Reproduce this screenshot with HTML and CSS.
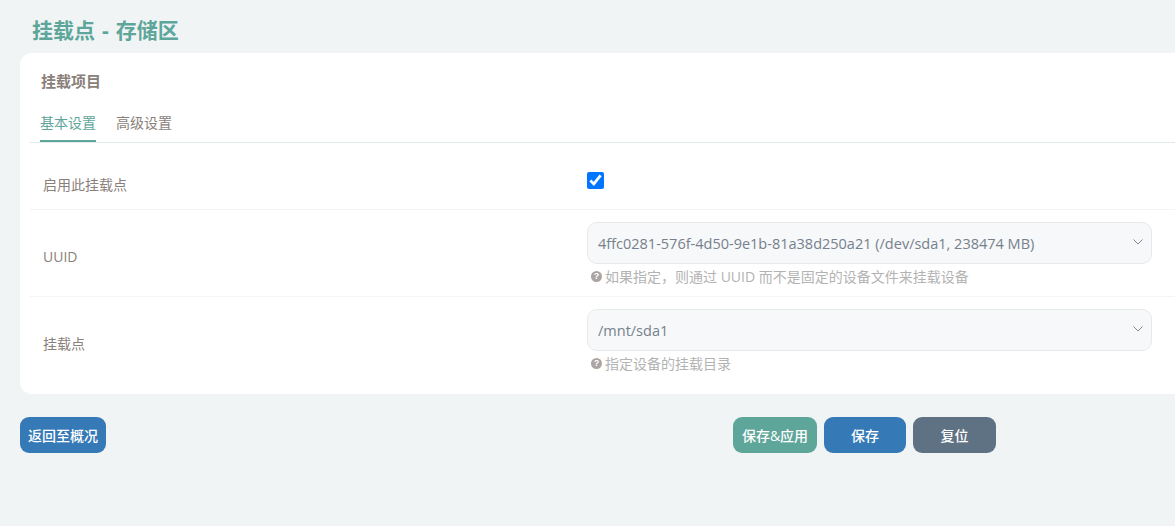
FILE: index.html
```html
<!DOCTYPE html>
<html lang="zh-CN">
<head>
  <meta charset="UTF-8">
  <title>挂载点 - 存储区</title>
  <link rel="stylesheet" href="styles.css">
</head>
<body>
  <div class="main">
    <h2 class="page-title">挂载点 - 存储区</h2>

    <div class="card">
      <h3 class="card-title">挂载项目</h3>
      <ul class="tabs">
        <li class="tab active">基本设置</li>
        <li class="tab">高级设置</li>
      </ul>

      <div class="row row-check">
        <label class="row-label">启用此挂载点</label>
        <div class="row-field">
          <input class="check" type="checkbox" checked>
        </div>
      </div>

      <div class="row">
        <label class="row-label">UUID</label>
        <div class="row-field">
          <div class="select-wrap">
            <select class="select">
              <option>4ffc0281-576f-4d50-9e1b-81a38d250a21 (/dev/sda1, 238474 MB)</option>
            </select>
            <svg class="chevron" width="10" height="6" viewBox="0 0 10 6"><path d="M.5.5L5 5 9.5.5" fill="none" stroke="#7f8a96" stroke-width="1"/></svg>
          </div>
          <div class="hint"><span class="hint-icon">?</span>如果指定，则通过 UUID 而不是固定的设备文件来挂载设备</div>
        </div>
      </div>

      <div class="row row-last">
        <label class="row-label">挂载点</label>
        <div class="row-field">
          <div class="select-wrap">
            <select class="select">
              <option>/mnt/sda1</option>
            </select>
            <svg class="chevron" width="10" height="6" viewBox="0 0 10 6"><path d="M.5.5L5 5 9.5.5" fill="none" stroke="#7f8a96" stroke-width="1"/></svg>
          </div>
          <div class="hint"><span class="hint-icon">?</span>指定设备的挂载目录</div>
        </div>
      </div>
    </div>

    <div class="actions">
      <button class="btn btn-blue btn-back">返回至概况</button>
      <div class="actions-right">
        <button class="btn btn-green">保存&amp;应用</button>
        <button class="btn btn-blue btn-save">保存</button>
        <button class="btn btn-gray">复位</button>
      </div>
    </div>
  </div>
</body>
</html>
```

FILE: styles.css
```css
html, body {
  margin: 0;
  height: 100%;
  overflow: hidden;
}
body {
  font-family: "Open Sans", "Noto Sans CJK SC", sans-serif;
  font-size: 14px;
  background-color: #f0f4f5;
  color: #8a7f7a;
}
.main {
  padding-left: 20px;
}
.page-title {
  margin: 0;
  padding: 15px 0 0 12px;
  height: 53px;
  box-sizing: border-box;
  font-size: 21px;
  line-height: 30px;
  font-weight: bold;
  word-spacing: 1.5px;
  color: #5ea69a;
}
.card {
  width: 1175px;
  height: 341px;
  box-sizing: border-box;
  padding: 0 10px;
  background: white;
  border-radius: 12px;
}
.card-title {
  margin: 0;
  padding: 18px 0 0 11px;
  height: 50px;
  box-sizing: border-box;
  font-size: 15px;
  line-height: 20px;
  font-weight: bold;
  color: #8a7f7a;
}
.tabs {
  display: flex;
  gap: 20px;
  margin: 0;
  padding: 0 0 0 10px;
  height: 40px;
  box-sizing: border-box;
  list-style: none;
  border-bottom: 1px solid #e2e9ea;
}
.tab {
  height: 39px;
  box-sizing: border-box;
  padding-top: 10px;
  line-height: 20px;
  color: #8a7f7a;
}
.tab.active {
  color: #5ea69a;
  border-bottom: 2px solid #5ea69a;
}
.row {
  display: flex;
  height: 87px;
  box-sizing: border-box;
  padding-top: 12px;
  border-bottom: 1px solid #f2f5f5;
}
.row-check {
  height: 67px;
  padding-top: 29px;
}
.row-last {
  border-bottom: none;
}
.row-label {
  width: 557px;
  padding: 25px 0 0 13px;
  box-sizing: border-box;
  line-height: 20px;
}
.row-check .row-label {
  padding-top: 3px;
}
.row-field {
  width: 565px;
}
.check {
  display: block;
  width: 17px;
  height: 17px;
  margin: 0;
  accent-color: #0075ff;
}
.select-wrap {
  position: relative;
}
.select {
  display: block;
  width: 100%;
  height: 42px;
  padding: 0 30px 0 10px;
  appearance: none;
  font-family: inherit;
  font-size: 14.5px;
  color: #76818d;
  background: #f7f8f9;
  border: 1px solid #e6e9ea;
  border-radius: 10px;
}
.chevron {
  position: absolute;
  right: 9px;
  top: 17px;
}
.hint {
  display: flex;
  align-items: center;
  margin-top: 3px;
  padding-left: 4px;
  height: 18px;
  font-size: 14px;
  color: #b3b3b3;
}
.hint-icon {
  flex: none;
  width: 11px;
  height: 11px;
  margin-right: 3px;
  border-radius: 50%;
  background: #aaa5a3;
  color: white;
  font-family: "Liberation Sans", sans-serif;
  font-size: 9px;
  font-weight: bold;
  line-height: 11px;
  text-align: center;
}
.actions {
  display: flex;
  margin-top: 23px;
}
.actions-right {
  display: flex;
  gap: 7px;
  margin-left: 627px;
}
.btn {
  height: 36px;
  padding: 0;
  border: none;
  border-radius: 9px;
  color: white;
  font-family: inherit;
  font-size: 14px;
  font-weight: 500;
  cursor: pointer;
}
.btn-back {
  width: 86px;
}
.btn-blue {
  background-color: #3579b6;
}
.btn-green {
  width: 84px;
  background-color: #5ea69a;
}
.btn-save {
  width: 82px;
}
.btn-gray {
  width: 83px;
  background-color: #5f7284;
}
```
